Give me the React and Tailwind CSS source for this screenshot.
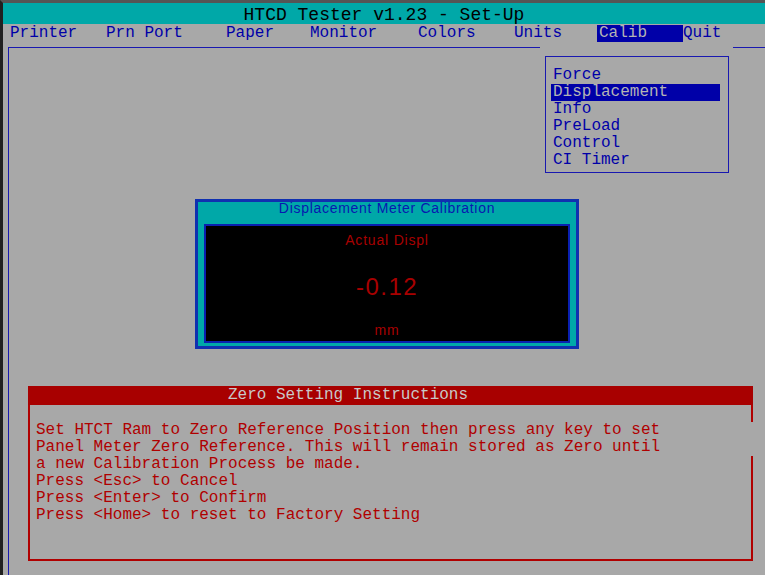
const mono = { fontFamily: '"Liberation Mono", "Courier New", monospace' }

const menu = [
  { label: 'Printer', w: 'w-[96px]' },
  { label: 'Prn Port', w: 'w-[120px]' },
  { label: 'Paper', w: 'w-[84px]' },
  { label: 'Monitor', w: 'w-[108px]' },
  { label: 'Colors', w: 'w-[96px]' },
  { label: 'Units', w: 'w-[83px]' },
  { label: 'Calib', w: 'w-[86px]', active: true },
  { label: 'Quit', w: 'w-[60px]' },
]

const calibItems = ['Force', 'Displacement', 'Info', 'PreLoad', 'Control', 'CI Timer']

const instructions = [
  'Set HTCT Ram to Zero Reference Position then press any key to set',
  'Panel Meter Zero Reference. This will remain stored as Zero until',
  'a new Calibration Process be made.',
  'Press <Esc> to Cancel',
  'Press <Enter> to Confirm',
  'Press <Home> to reset to Factory Setting',
]

function MenuBar() {
  return (
    <div className="h-[23px] flex items-start pl-[7px] pt-[1px] text-[16px] text-[#0000a8]" style={mono}>
      {menu.map((m) =>
        m.active ? (
          <span key={m.label} className={`${m.w} h-[17px] leading-[17px] pl-[2px] bg-[#0000a8] text-[#b4b4b4] whitespace-pre`}>
            {m.label}
          </span>
        ) : (
          <span key={m.label} className={`${m.w} h-[17px] leading-[17px] whitespace-pre`}>
            {m.label}
          </span>
        )
      )}
    </div>
  )
}

function CalibMenu() {
  return (
    <div className="absolute left-[537px] top-[40px] w-[193px] h-[134px] bg-[#a8a8a8] pl-[5px] pt-[13px]">
      <div className="w-[184px] h-[117px] border border-[#1818b0] pt-[10px] text-[16px] text-[#0000a8]" style={mono}>
        {calibItems.map((item) => (
          <div
            key={item}
            className={
              item === 'Displacement'
                ? 'ml-[5px] w-[169px] h-[17px] leading-[17px] pl-[2px] bg-[#0000a8] text-[#b4b4b4] whitespace-pre'
                : 'ml-[5px] h-[17px] leading-[17px] pl-[2px] whitespace-pre'
            }
          >
            {item}
          </div>
        ))}
      </div>
    </div>
  )
}

function MeterPanel() {
  const sans = { fontFamily: '"Liberation Sans", Arial, sans-serif' }
  return (
    <div className="ml-[186px] mt-[151px] w-[384px] h-[150px] bg-[#00a8a8] border-[3px] border-[#1030b0] flex flex-col" style={sans}>
      <div className="h-[22px] leading-[13px] text-center text-[14px] tracking-[0.7px] text-[#0818b0]">
        Displacement Meter Calibration
      </div>
      <div className="mx-[6px] h-[119px] bg-black border-2 border-[#0a20b0] flex flex-col items-center text-[#a80000]">
        <div className="mt-[5px] h-[18px] leading-[18px] text-[14px] tracking-[0.8px]">Actual Displ</div>
        <div className="mt-[23px] h-[30px] leading-[30px] text-[24px] tracking-[1.5px]">-0.12</div>
        <div className="mt-[19px] h-[18px] leading-[18px] text-[14px] tracking-[0.8px]">mm</div>
      </div>
    </div>
  )
}

function InstructionBox() {
  return (
    <div className="ml-[19px] mt-[37px] w-[725px] h-[175px] border-2 border-t-0 border-[#b00000] text-[16px]" style={mono}>
      <div className="-mx-[2px] h-[19px] bg-[#a80000] text-[#c8c8c8] leading-[19px] pl-[200px] whitespace-pre">
        Zero Setting Instructions
      </div>
      <div className="pt-[17px] text-[#b00000]">
        {instructions.map((line, i) => (
          <div
            key={i}
            className={`h-[17px] leading-[17px] pl-[6px] whitespace-pre ${i < 2 ? 'relative -mr-[2px] bg-[#a8a8a8]' : ''}`}
          >
            {line}
          </div>
        ))}
      </div>
    </div>
  )
}

export default function App() {
  return (
    <div className="relative w-[765px] h-[575px] overflow-hidden bg-[#a8a8a8] border-t-[3px] border-t-[#555] border-l-[3px] border-l-[#202020] flex flex-col">
      <div className="h-[21px] shrink-0 bg-[#00a8a8] flex items-center justify-center text-[18px] text-black pt-[4px]" style={mono}>
        HTCD Tester v1.23 - Set-Up
      </div>
      <MenuBar />
      <div className="flex-1 ml-[5px] border-t border-l border-[#1818b0]">
        <MeterPanel />
        <InstructionBox />
      </div>
      <CalibMenu />
    </div>
  )
}
